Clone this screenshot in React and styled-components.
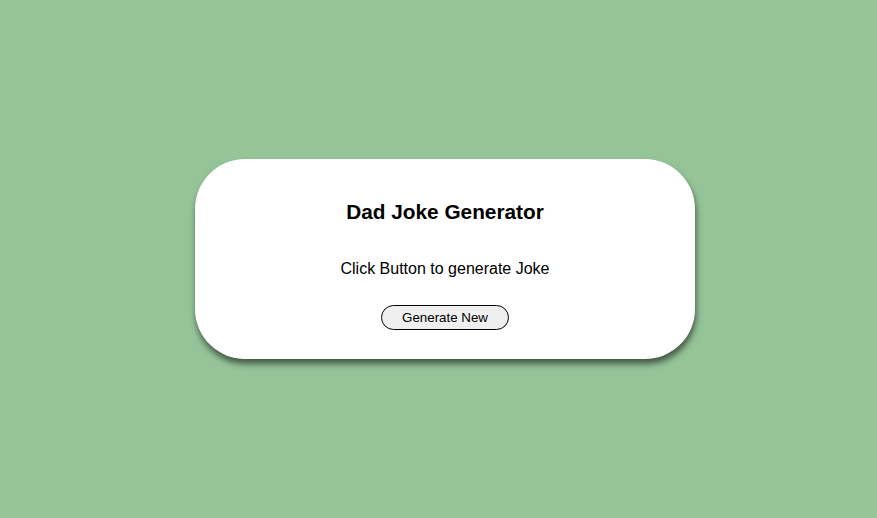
import React, { useState } from 'react';
import styled, { createGlobalStyle } from 'styled-components';

const GlobalStyle = createGlobalStyle`
  html, body {
    margin: 0;
    padding: 0;
  }
  body {
    background: #96c499;
    font-family: "Liberation Sans", Arial, sans-serif;
  }
`;

const Page = styled.div`
  min-height: 100vh;
  display: flex;
  align-items: center;
  justify-content: center;
  padding-left: 13px;
  box-sizing: border-box;
`;

const Card = styled.div`
  width: 500px;
  box-sizing: border-box;
  padding: 41px 20px 29px;
  background: #ffffff;
  border-radius: 50px;
  box-shadow: 1px 5px 6px rgba(0, 0, 0, 0.55);
  display: flex;
  flex-direction: column;
  align-items: center;
  text-align: center;
`;

const Title = styled.h2`
  margin: 0 0 36px;
  font-size: 20.8px;
  font-weight: bold;
  color: #000;
`;

const Joke = styled.p`
  margin: 0 0 27px;
  font-size: 16px;
  color: #000;
`;

const Button = styled.button`
  font-family: "Liberation Sans", Arial, sans-serif;
  font-size: 13.33px;
  padding: 4px 20px;
  min-width: 127px;
  height: 25px;
  background: #efefef;
  color: #000;
  border: 1px solid #000;
  border-radius: 13px;
  cursor: pointer;
`;

const jokes = [
  'I only know 25 letters of the alphabet. I don\'t know y.',
  'Why do fathers take an extra pair of socks when they go golfing? In case they get a hole in one!',
  'I\'m reading a book about anti-gravity. It\'s impossible to put down!',
];

export default function App() {
  const [joke, setJoke] = useState('Click Button to generate Joke');

  const generate = () => {
    setJoke(jokes[Math.floor(Math.random() * jokes.length)]);
  };

  return (
    <>
      <GlobalStyle />
      <Page>
        <Card>
          <Title>Dad Joke Generator</Title>
          <Joke>{joke}</Joke>
          <Button onClick={generate}>Generate New</Button>
        </Card>
      </Page>
    </>
  );
}
